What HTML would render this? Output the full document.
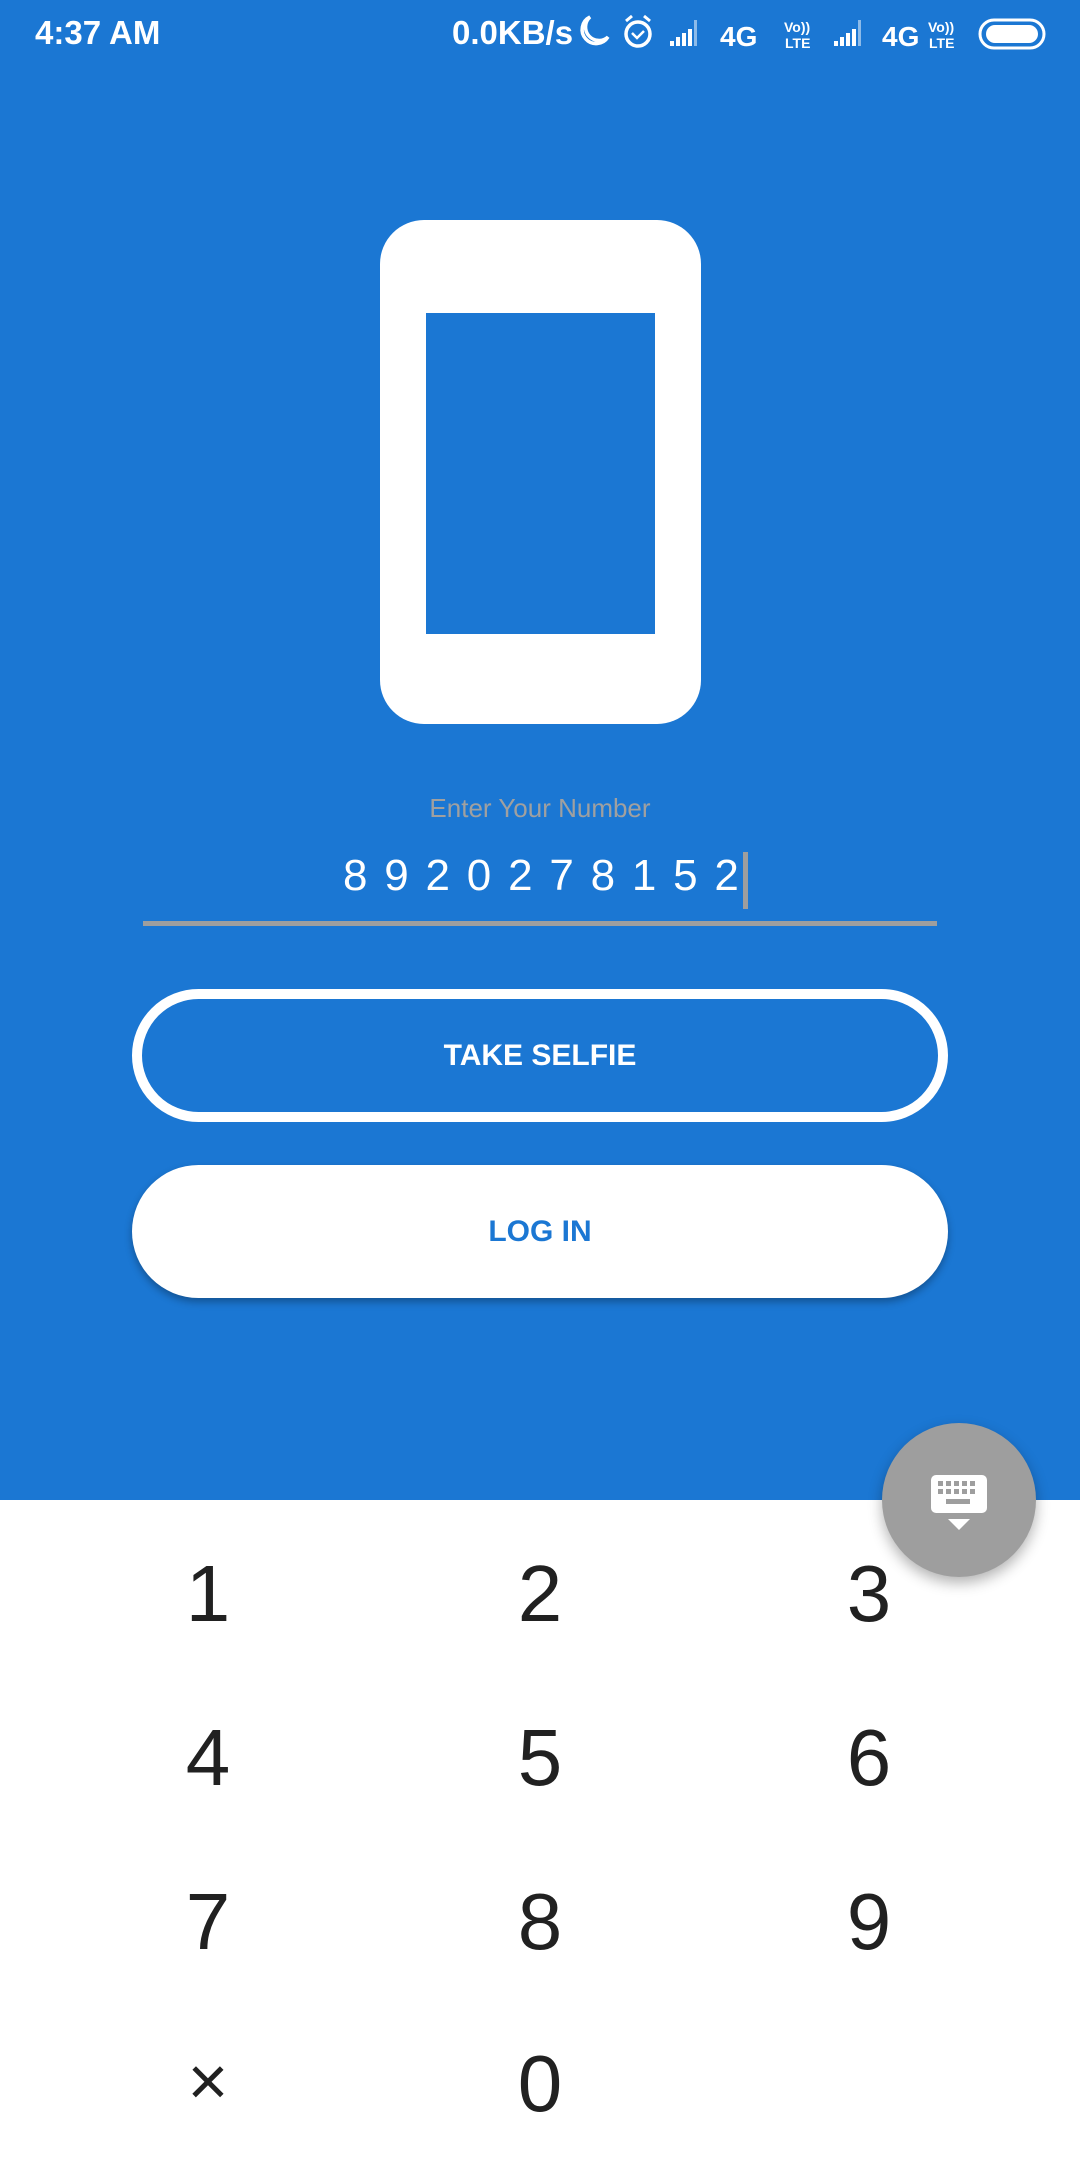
<!DOCTYPE html>
<html><head><meta charset="utf-8"><style>
*{margin:0;padding:0;box-sizing:border-box}
body{width:1080px;height:2160px;overflow:hidden;background:#fff;font-family:"Liberation Sans",sans-serif;position:relative}
.top{position:absolute;left:0;top:0;width:1080px;height:1500px;background:#1b77d3}
.abs{position:absolute}
.sb{color:#fff;font-weight:bold;font-size:33px;top:14px}
.phone{left:380px;top:220px;width:321px;height:504px;background:#fff;border-radius:44px}
.scr{left:426px;top:313px;width:229px;height:321px;background:#1b77d3}
.lbl{left:0;width:1080px;text-align:center;top:793px;color:#a0a0a0;font-size:26px}
.num{left:343px;top:851px;color:#fff;font-size:44px;letter-spacing:16.8px;white-space:nowrap}
.cur{left:743px;top:852px;width:5px;height:57px;background:#9e9e9e}
.line{left:143px;top:921px;width:794px;height:5px;background:#9e9e9e}
.b1{left:132px;top:989px;width:816px;height:133px;border:10px solid #fff;border-radius:70px;color:#fff;font-weight:bold;font-size:30px;display:flex;align-items:center;justify-content:center}
.b2{left:132px;top:1165px;width:816px;height:133px;background:#fff;border-radius:70px;color:#1b77d3;font-weight:bold;font-size:30px;display:flex;align-items:center;justify-content:center;box-shadow:0 4px 8px rgba(0,0,0,.3)}
.k{position:absolute;width:200px;text-align:center;font-size:80px;color:#212121;line-height:1}
.fab{left:882px;top:1423px;width:154px;height:154px;border-radius:50%;background:#9e9e9e;box-shadow:0 6px 14px rgba(0,0,0,.3)}
</style></head><body>
<div class="top"></div>
<div class="abs sb" style="left:35px">4:37 AM</div>
<div class="abs sb" style="left:452px">0.0KB/s</div>
<svg class="abs" style="left:570px;top:12px" width="490" height="40" viewBox="0 0 490 40" fill="#fff">
<path d="M20 5a14 14 0 1 0 18 20a12 12 0 0 1 -18 -20z" fill="none" stroke="#fff" stroke-width="3.5"/>
<circle cx="68" cy="22" r="12" fill="none" stroke="#fff" stroke-width="3.5"/>
<path d="M62 21l5 5 7-7" fill="none" stroke="#fff" stroke-width="2.5"/>
<path d="M56 9l6-5M80 9l-6-5" stroke="#fff" stroke-width="3"/>
<path d="M100 34h4v-5h-4zM106 34h4v-9h-4zM112 34h4v-13h-4zM118 34h4v-17h-4z"/><rect x="124" y="8" width="3" height="26" opacity=".5"/>
<text x="150" y="34" font-size="28" font-weight="bold" font-family="Liberation Sans">4G</text>
<text x="214" y="20" font-size="14" font-weight="bold" font-family="Liberation Sans">Vo))</text>
<text x="215" y="36" font-size="14" font-weight="bold" font-family="Liberation Sans">LTE</text>
<path d="M264 34h4v-5h-4zM270 34h4v-9h-4zM276 34h4v-13h-4zM282 34h4v-17h-4z"/><rect x="288" y="8" width="3" height="26" opacity=".5"/>
<text x="312" y="34" font-size="28" font-weight="bold" font-family="Liberation Sans">4G</text>
<text x="358" y="20" font-size="14" font-weight="bold" font-family="Liberation Sans">Vo))</text>
<text x="359" y="36" font-size="14" font-weight="bold" font-family="Liberation Sans">LTE</text>
<rect x="410" y="8" width="64" height="28" rx="14" fill="none" stroke="#fff" stroke-width="3"/>
<rect x="416" y="13" width="52" height="18" rx="9"/>
</svg>
<div class="abs phone"></div>
<div class="abs scr"></div>
<div class="abs lbl">Enter Your Number</div>
<div class="abs num">8920278152</div>
<div class="abs cur"></div>
<div class="abs line"></div>
<div class="abs b1">TAKE SELFIE</div>
<div class="abs b2">LOG IN</div>
<div class="k" style="left:108px;top:1554px">1</div>
<div class="k" style="left:440px;top:1554px">2</div>
<div class="k" style="left:769px;top:1554px">3</div>
<div class="k" style="left:108px;top:1718px">4</div>
<div class="k" style="left:440px;top:1718px">5</div>
<div class="k" style="left:769px;top:1718px">6</div>
<div class="k" style="left:108px;top:1882px">7</div>
<div class="k" style="left:440px;top:1882px">8</div>
<div class="k" style="left:769px;top:1882px">9</div>
<div class="k" style="left:108px;top:2046px;font-size:70px">×</div>
<div class="k" style="left:440px;top:2044px">0</div>
<div class="abs fab">
<svg width="154" height="154" viewBox="0 0 154 154" style="position:absolute;left:0;top:0">
<rect x="49" y="52" width="56" height="38" rx="5" fill="#fff"/>
<g fill="#9e9e9e">
<rect x="56" y="58" width="5" height="5"/><rect x="64" y="58" width="5" height="5"/><rect x="72" y="58" width="5" height="5"/><rect x="80" y="58" width="5" height="5"/><rect x="88" y="58" width="5" height="5"/>
<rect x="56" y="66" width="5" height="5"/><rect x="64" y="66" width="5" height="5"/><rect x="72" y="66" width="5" height="5"/><rect x="80" y="66" width="5" height="5"/><rect x="88" y="66" width="5" height="5"/>
<rect x="64" y="76" width="24" height="5"/></g>
<path d="M66 96h22l-11 11z" fill="#fff"/>
</svg></div>
</body></html>
